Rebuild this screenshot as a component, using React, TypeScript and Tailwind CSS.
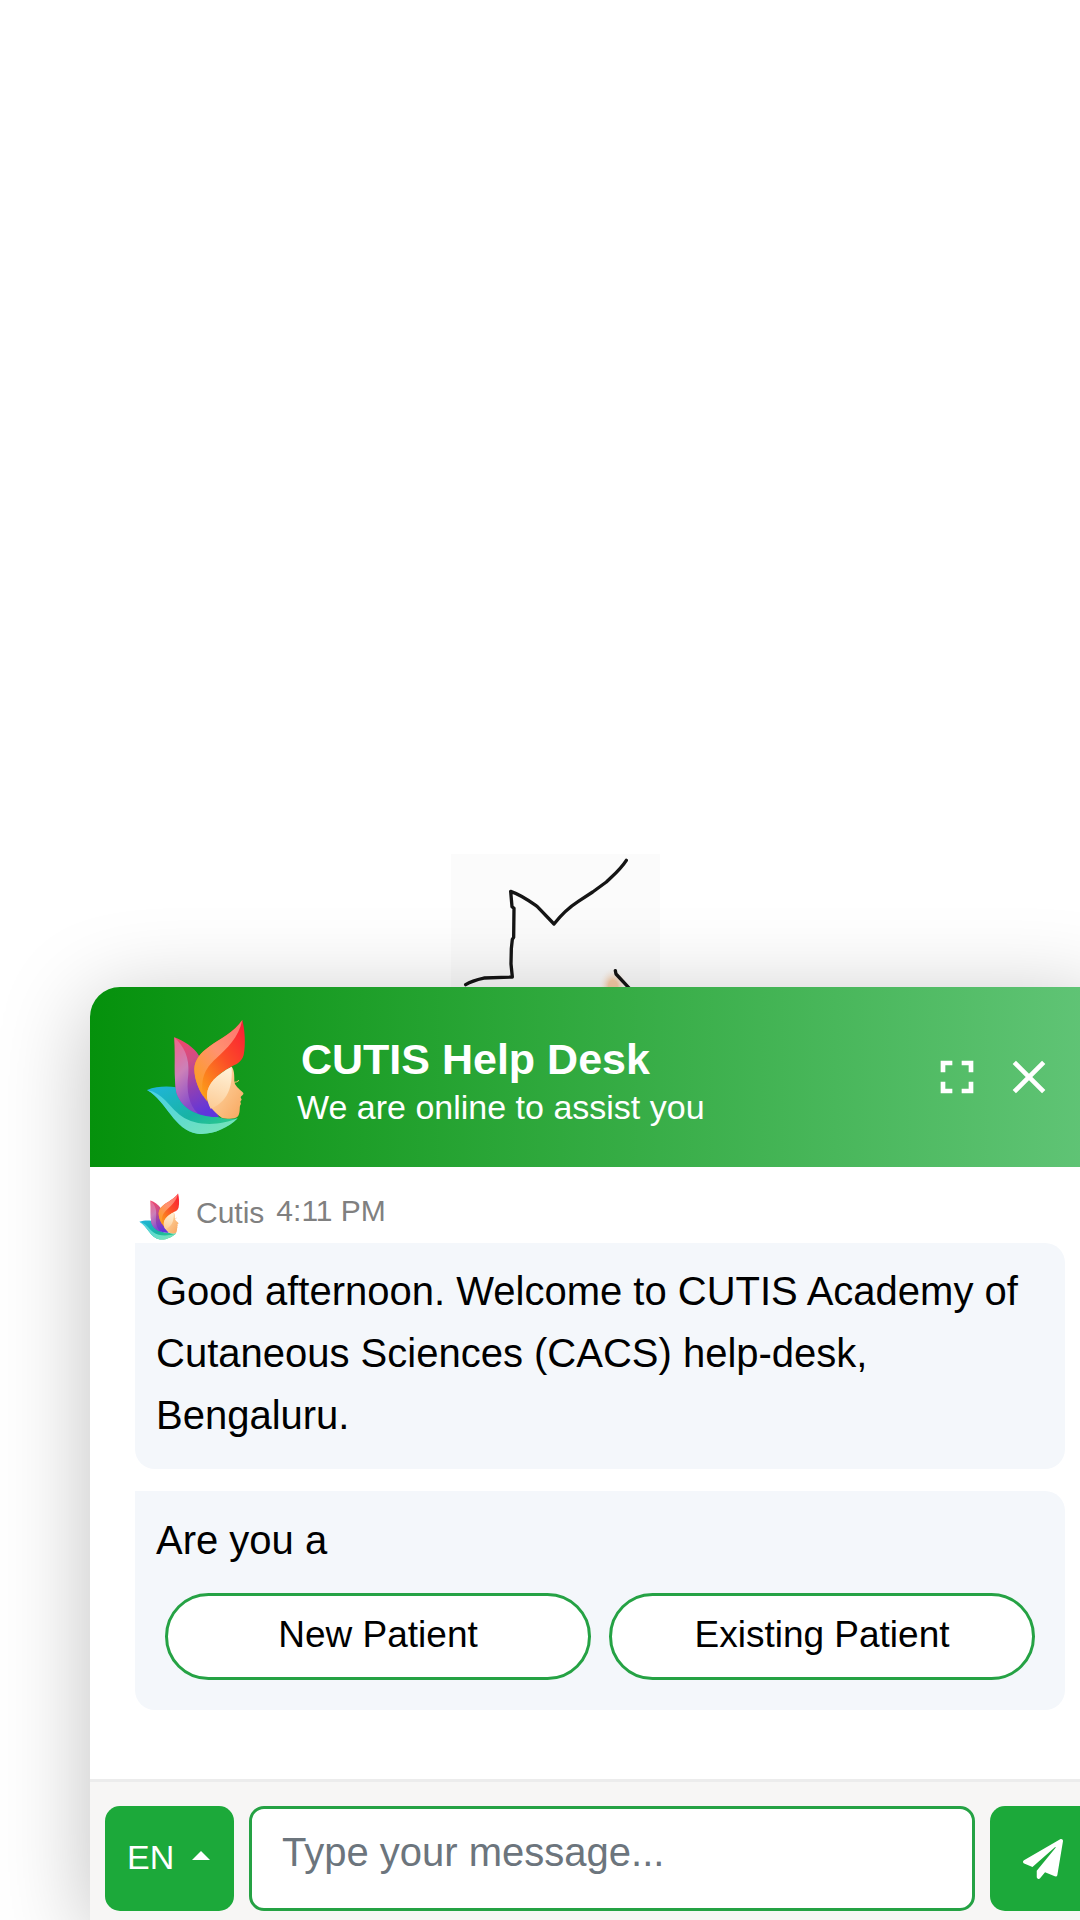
import React, { useState, FormEvent } from 'react';
import { FaPaperPlane } from 'react-icons/fa';
import { MdClose, MdFullscreen } from 'react-icons/md';

type LogoProps = {
  id: string;
  className: string;
};

const Logo = ({ id, className }: LogoProps) => (
  <svg viewBox="52 30 297 348" className={className} role="img" aria-label="Cutis logo">
    <defs>
      <linearGradient id={`${id}-teal`} x1="0" y1="0" x2="1" y2="1">
        <stop offset="0" stopColor="#1fb5dc" />
        <stop offset="0.55" stopColor="#18b3a4" />
        <stop offset="1" stopColor="#36d47f" />
      </linearGradient>
      <linearGradient id={`${id}-aqua`} x1="0" y1="0" x2="1" y2="1">
        <stop offset="0" stopColor="#46cfe6" />
        <stop offset="1" stopColor="#7be6b5" />
      </linearGradient>
      <linearGradient id={`${id}-purple`} x1="0.2" y1="0" x2="0.5" y2="1">
        <stop offset="0" stopColor="#f0476c" />
        <stop offset="0.3" stopColor="#d14d84" />
        <stop offset="0.65" stopColor="#8f40b4" />
        <stop offset="1" stopColor="#5f35dc" />
      </linearGradient>
      <linearGradient id={`${id}-pink`} x1="0" y1="0" x2="0.3" y2="1">
        <stop offset="0" stopColor="#f0648a" />
        <stop offset="0.5" stopColor="#cc80b8" />
        <stop offset="1" stopColor="#864ccb" />
      </linearGradient>
      <linearGradient id={`${id}-red`} x1="1" y1="0" x2="0.1" y2="1">
        <stop offset="0" stopColor="#fb1936" />
        <stop offset="0.45" stopColor="#fb4d27" />
        <stop offset="1" stopColor="#fcab16" />
      </linearGradient>
      <linearGradient id={`${id}-coral`} x1="1" y1="0" x2="0.2" y2="1">
        <stop offset="0" stopColor="#ff706e" />
        <stop offset="0.5" stopColor="#ff9270" />
        <stop offset="1" stopColor="#fc9d22" />
      </linearGradient>
      <linearGradient id={`${id}-skin`} x1="0" y1="0" x2="1" y2="1">
        <stop offset="0" stopColor="#ffe1b4" />
        <stop offset="1" stopColor="#f8a65d" />
      </linearGradient>
      <linearGradient id={`${id}-light`} x1="0.4" y1="0" x2="0.2" y2="1">
        <stop offset="0" stopColor="#fff0d5" />
        <stop offset="1" stopColor="#fccb95" />
      </linearGradient>
    </defs>
    <path fill={`url(#${id}-teal)`} d="M52 243C80 232 112 231 140 235C160 290 205 324 262 323C284 330 304 331 324 328C292 360 245 379 203 374C132 363 113 278 52 243Z" />
    <path fill={`url(#${id}-aqua)`} d="M52 243C100 252 118 293 155 321C200 354 275 349 324 328C292 360 245 379 203 374C132 363 113 278 52 243Z" />
    <path fill={`url(#${id}-purple)`} d="M134 85C164 97 191 113 208 140L240 270L268 324C210 327 155 300 140 250C132 205 138 150 134 85Z" />
    <path fill={`url(#${id}-pink)`} d="M134 85C163 113 180 145 176 195C169 248 178 287 204 313C169 303 147 275 140 250C132 205 138 150 134 85Z" />
    <path fill={`url(#${id}-red)`} d="M338 33C345 60 349 105 342 138C335 162 318 166 303 174C262 197 234 224 234 279C210 250 195 215 194 180C195 155 210 133 240 112C270 90 314 69 338 33Z" />
    <path fill={`url(#${id}-coral)`} d="M338 33C327 86 292 118 260 148C222 182 213 212 220 261C204 236 194 206 194 180C195 155 210 133 240 112C270 90 314 69 338 33Z" />
    <path fill={`url(#${id}-skin)`} d="M306 173C314 183 314 199 314 217C315 231 328 239 341 252C343 257 334 260 333 265L336 272L332 278L334 285C327 291 334 307 325 322C314 332 292 330 276 326C252 308 232 288 232 257C234 222 261 198 306 173Z" />
    <path fill={`url(#${id}-light)`} d="M306 173C308 218 304 274 243 299C236 286 232 272 232 257C234 222 261 198 306 173Z" />
    <path d="M313 220Q322 220 328 214" fill="none" stroke="#f8b96d" strokeWidth="3" />
  </svg>
);

// Line sketch on the page behind the chat window
const Sketch = () => (
  <svg viewBox="0 0 627 399" className="block w-[209px] h-[133px] bg-[#fbfbfb]" aria-hidden="true">
    <defs>
      <radialGradient id="sketch-glow">
        <stop offset="0.3" stopColor="#f8cda8" />
        <stop offset="1" stopColor="#fbfbfb" stopOpacity="0" />
      </radialGradient>
    </defs>
    <ellipse cx="486" cy="396" rx="44" ry="56" fill="url(#sketch-glow)" />
    <g fill="none" stroke="#151515" strokeWidth="10" strokeLinejoin="round" strokeLinecap="round">
      <path d="M44 392C63 380 82 376 100 372L184 369L180 330L181 284L184 256L188 250L189 163L183 158L179 112C216 125 239 144 259 158L309 210C330 183 354 160 382 142L425 114L466 84C490 61 508 47 526 19" />
      <path d="M493 350L495 360L536 404" />
    </g>
  </svg>
);

const App = () => {
  const [message, setMessage] = useState('');
  const [language, setLanguage] = useState('EN');

  const handleSubmit = (e: FormEvent) => {
    e.preventDefault();
    setMessage('');
  };

  return (
    <div className="min-h-screen flex flex-col overflow-hidden bg-white font-['Liberation_Sans',Arial,sans-serif] text-black">
      <div className="flex-1 flex items-end justify-center pl-[30px]">
        <Sketch />
      </div>

      <main className="relative ml-[90px] -mr-[30px] rounded-t-[30px] bg-white shadow-[0_15px_90px_rgba(0,0,0,0.25)]">
        <header className="flex items-center h-[180px] pl-[57px] pr-[45px] rounded-t-[30px] bg-linear-to-r/srgb from-[#05910c] to-[#62c578] text-white">
          <Logo id="header" className="w-[99px] h-[116px] shrink-0" />
          <div className="ml-[51px] pt-3 flex-1">
            <h1 className="pl-1 text-[43px] leading-[48px] font-bold">CUTIS Help Desk</h1>
            <p className="text-[34px] leading-[48px]">We are online to assist you</p>
          </div>
          <div className="flex">
            <button type="button" aria-label="Full screen" className="p-2">
              <MdFullscreen className="size-14" />
            </button>
            <button type="button" aria-label="Close" className="p-2">
              <MdClose className="size-14" />
            </button>
          </div>
        </header>

        <section className="px-[45px] pt-[26px] pb-[69px]">
          <div className="flex items-start h-[50px] pl-1 text-[30px] leading-[40px] text-[#808080]">
            <Logo id="message" className="w-[41px] h-[47px]" />
            <span className="ml-4">Cutis</span>
            <time className="ml-3 leading-[36px]">4:11 PM</time>
          </div>

          <div className="rounded-[20px] rounded-tl-none bg-[#f4f7fb] pt-[17px] pb-[23px] px-[21px] text-[40px] leading-[62px]">
            Good afternoon. Welcome to CUTIS Academy of
            <br />
            Cutaneous Sciences (CACS) help-desk,
            <br />
            Bengaluru.
          </div>

          <div className="mt-[22px] rounded-[20px] rounded-tl-none bg-[#f4f7fb] pt-[18px] pb-[30px] px-[21px]">
            <p className="text-[40px] leading-[62px]">Are you a</p>
            <div className="grid grid-cols-2 gap-[18px] mt-[22px] px-[9px]">
              <button type="button" className="h-[87px] pb-1 rounded-full border-[3px] border-[#25a244] bg-white text-[37px]">
                New Patient
              </button>
              <button type="button" className="h-[87px] pb-1 rounded-full border-[3px] border-[#25a244] bg-white text-[37px]">
                Existing Patient
              </button>
            </div>
          </div>
        </section>

        <form onSubmit={handleSubmit} className="flex gap-[15px] border-t-[3px] border-[#ececec] bg-[#f7f6f5] px-[15px] pt-6 pb-[9px]">
          <div className="relative w-[129px] shrink-0">
            <select
              name="language"
              aria-label="Language"
              value={language}
              onChange={(e) => setLanguage(e.target.value)}
              className="appearance-none w-full h-[105px] pl-[22px] pb-0.5 rounded-[15px] bg-[#1ca93a] text-white text-[34px]"
            >
              <option value="EN">EN</option>
              <option value="HI">HI</option>
              <option value="KN">KN</option>
            </select>
            <svg viewBox="0 0 18 9" className="pointer-events-none absolute right-6 top-[45px] w-[18px] h-[9px]" aria-hidden="true">
              <path d="M0 9L9 0L18 9Z" fill="#fff" />
            </svg>
          </div>
          <input
            type="text"
            name="message"
            aria-label="Message"
            value={message}
            placeholder="Type your message..."
            onChange={(e) => setMessage(e.target.value)}
            className="min-w-0 flex-1 h-[105px] px-[30px] pb-3 rounded-[15px] border-[3px] border-[#25a244] bg-white text-[40px] placeholder:text-[#6c757d]"
          />
          <button type="submit" aria-label="Send" className="flex items-center justify-center w-[105px] h-[105px] shrink-0 rounded-[15px] bg-[#1ca93a] text-white">
            <FaPaperPlane className="size-10" />
          </button>
        </form>
      </main>
    </div>
  );
};

export default App;
